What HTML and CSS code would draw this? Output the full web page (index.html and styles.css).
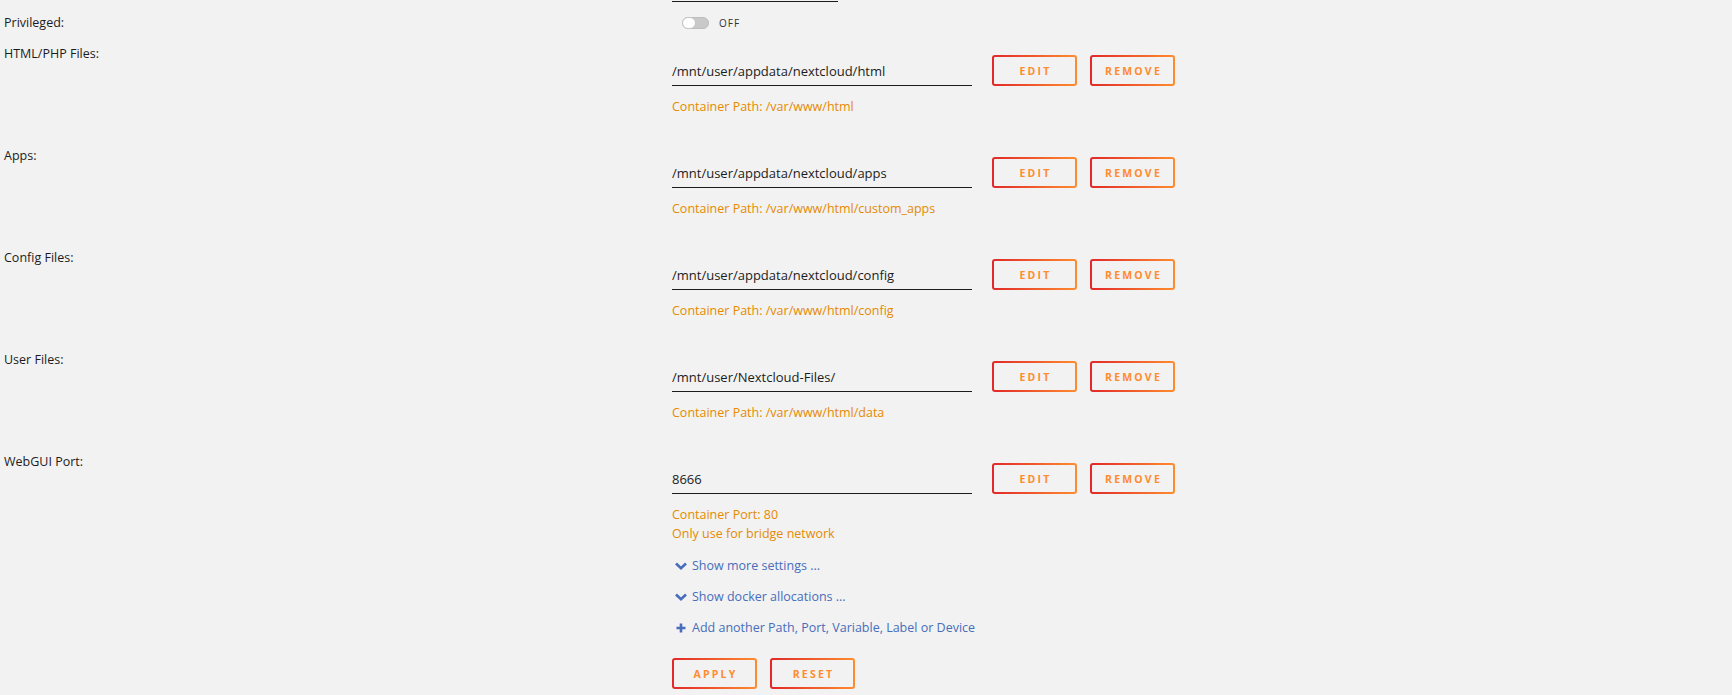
FILE: index.html
```html
<!DOCTYPE html>
<html>
<head>
<meta charset="utf-8">
<link rel="stylesheet" href="styles.css">
</head>
<body>
<div class="form">
  <div class="row prev">
    <div class="label"></div>
    <div class="content"><div class="prev-line"></div></div>
  </div>

  <div class="row priv">
    <div class="label">Privileged:</div>
    <div class="content">
      <div class="switch"><span class="track"><span class="knob"></span></span><span class="switch-text">OFF</span></div>
    </div>
  </div>

  <div class="row">
    <div class="label">HTML/PHP Files:</div>
    <div class="content">
      <div class="field-line">
        <div class="input">/mnt/user/appdata/nextcloud/html</div>
        <button class="btn first">EDIT</button>
        <button class="btn">REMOVE</button>
      </div>
      <div class="info">Container Path: /var/www/html</div>
    </div>
  </div>

  <div class="row">
    <div class="label">Apps:</div>
    <div class="content">
      <div class="field-line">
        <div class="input">/mnt/user/appdata/nextcloud/apps</div>
        <button class="btn first">EDIT</button>
        <button class="btn">REMOVE</button>
      </div>
      <div class="info">Container Path: /var/www/html/custom_apps</div>
    </div>
  </div>

  <div class="row">
    <div class="label">Config Files:</div>
    <div class="content">
      <div class="field-line">
        <div class="input">/mnt/user/appdata/nextcloud/config</div>
        <button class="btn first">EDIT</button>
        <button class="btn">REMOVE</button>
      </div>
      <div class="info">Container Path: /var/www/html/config</div>
    </div>
  </div>

  <div class="row">
    <div class="label">User Files:</div>
    <div class="content">
      <div class="field-line">
        <div class="input">/mnt/user/Nextcloud-Files/</div>
        <button class="btn first">EDIT</button>
        <button class="btn">REMOVE</button>
      </div>
      <div class="info">Container Path: /var/www/html/data</div>
    </div>
  </div>

  <div class="row last">
    <div class="label">WebGUI Port:</div>
    <div class="content">
      <div class="field-line">
        <div class="input">8666</div>
        <button class="btn first">EDIT</button>
        <button class="btn">REMOVE</button>
      </div>
      <div class="info">Container Port: 80</div>
      <div class="info">Only use for bridge network</div>
      <div class="links">
        <div class="link"><svg class="ico" viewBox="0 0 12 12"><path d="M1 3.5 L6 8.3 L11 3.5" fill="none" stroke="#486dba" stroke-width="2.6"/></svg>Show more settings ...</div>
        <div class="link"><svg class="ico" viewBox="0 0 12 12"><path d="M1 3.5 L6 8.3 L11 3.5" fill="none" stroke="#486dba" stroke-width="2.6"/></svg>Show docker allocations ...</div>
        <div class="link"><svg class="ico" viewBox="0 0 12 12"><path d="M6 1.5 V10.5 M1.5 6 H10.5" fill="none" stroke="#486dba" stroke-width="2.6"/></svg>Add another Path, Port, Variable, Label or Device</div>
      </div>
      <div class="actions">
        <button class="btn">APPLY</button>
        <button class="btn">RESET</button>
      </div>
    </div>
  </div>
</div>
</body>
</html>
```
FILE: styles.css
```css
html, body {
  margin: 0;
  padding: 0;
  background: #f2f2f2;
}
body {
  font-family: "Open Sans", "Noto Sans", sans-serif;
  font-size: 12.5px;
  color: #1c1c1c;
  overflow: hidden;
}
.form {
  padding-left: 4px;
}
.row {
  display: grid;
  grid-template-columns: 668px 1fr;
  margin-bottom: 30px;
}
.label {
  line-height: 20px;
}
.content {
  padding-top: 11px;
}
.row.prev {
  margin-bottom: 0;
}
.row.prev .content {
  padding-top: 0;
}
.prev-line {
  width: 166px;
  height: 1px;
  margin-top: 1px;
  background: #1c1c1c;
}
.row.priv {
  margin-top: 11px;
  margin-bottom: 0;
  height: 31px;
}
.row.priv .content {
  padding-top: 2px;
}
.switch {
  display: flex;
  align-items: center;
  height: 16px;
  gap: 10px;
  padding-left: 10px;
}
.track {
  position: relative;
  width: 27px;
  height: 12px;
  border-radius: 6px;
  background: #c9c9c9;
  box-sizing: border-box;
  border: 1px solid #bdbdbd;
}
.knob {
  position: absolute;
  left: -1px;
  top: -1px;
  width: 14px;
  height: 12px;
  border-radius: 6px;
  background: #fff;
  box-sizing: border-box;
  border: 1px solid #c4c4c4;
}
.switch-text {
  font-size: 10px;
  letter-spacing: 1px;
  color: #333;
}
.field-line {
  display: flex;
  align-items: flex-start;
  height: 31px;
}
.input {
  width: 300px;
  height: 31px;
  box-sizing: border-box;
  border-bottom: 1px solid #1c1c1c;
  line-height: 30px;
  padding-top: 1px;
  font-size: 13px;
  white-space: nowrap;
}
.btn {
  width: 85px;
  height: 31px;
  box-sizing: border-box;
  border: 2px solid transparent;
  border-radius: 3px;
  background: linear-gradient(#f2f2f2, #f2f2f2) padding-box,
              linear-gradient(90deg, #e22828 0%, #ff8c2f 100%) border-box;
  color: #ff8c2f;
  font-family: "Open Sans", "Noto Sans", sans-serif;
  font-weight: 700;
  font-size: 10.5px;
  letter-spacing: 2.2px;
  padding: 0 0 0 2px;
  margin-left: 13px;
  cursor: pointer;
}
.btn.first {
  margin-left: 20px;
}
.info {
  color: #e68a00;
  line-height: 19px;
}
.field-line + .info {
  margin-top: 11px;
}
.links {
  margin-top: 7px;
  color: #486dba;
}
.link {
  display: flex;
  align-items: center;
  height: 31px;
}
.ico {
  width: 12px;
  height: 12px;
  margin-left: 3px;
  margin-right: 5px;
}
.actions {
  display: flex;
  margin-top: 15px;
}
.actions .btn:first-child {
  margin-left: 0;
}
```
